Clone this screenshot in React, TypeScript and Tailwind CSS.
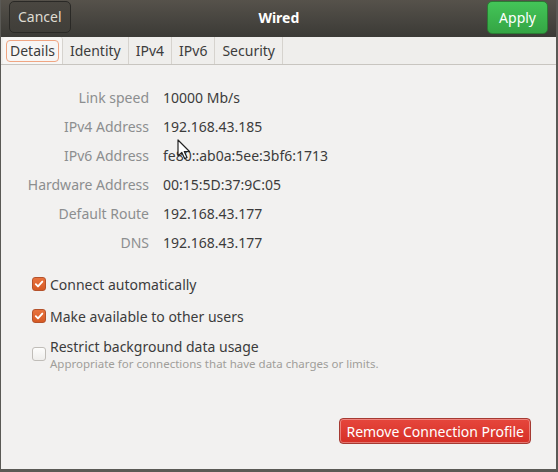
import React from "react";

const rows = [
  { label: "Link speed", value: "10000 Mb/s" },
  { label: "IPv4 Address", value: "192.168.43.185" },
  { label: "IPv6 Address", value: "fe80::ab0a:5ee:3bf6:1713" },
  { label: "Hardware Address", value: "00:15:5D:37:9C:05" },
  { label: "Default Route", value: "192.168.43.177" },
  { label: "DNS", value: "192.168.43.177" },
];

const tabs = ["Details", "Identity", "IPv4", "IPv6", "Security"];

function Check({ checked }: { checked: boolean }) {
  if (!checked) {
    return (
      <span className="block w-[14px] h-[14px] rounded-[3px] border border-[#c0bdb8] bg-gradient-to-b from-[#fdfdfc] to-[#efeeec] shrink-0" />
    );
  }
  return (
    <span className="w-[14px] h-[14px] rounded-[3px] border border-[#b5522b] bg-gradient-to-b from-[#e8733e] to-[#d65a24] flex items-center justify-center shrink-0">
      <svg width="10" height="10" viewBox="0 0 10 10">
        <path d="M1.8 5.2 L4 7.4 L8.3 2.6" fill="none" stroke="white" strokeWidth="1.9" strokeLinecap="round" strokeLinejoin="round" />
      </svg>
    </span>
  );
}

export default function App() {
  return (
    <div className="w-[558px] h-[472px] bg-[#f2f1f0] relative flex flex-col border-l border-r-2 border-b-[3px] border-[#5a5955] font-['Noto_Sans',sans-serif] overflow-hidden">
      {/* Header bar */}
      <div className="h-[37px] shrink-0 bg-gradient-to-b from-[#56524b] to-[#3b3a36] flex items-center justify-between pl-2 pr-2">
        <button className="h-[32px] -mt-[4px] px-[8px] rounded-[5px] border border-[#2a2926] bg-gradient-to-b from-[#4a4741] to-[#403e39] text-[#dfdbd2] text-[14px]">
          Cancel
        </button>
        <span className="text-white text-[14px] font-bold -mt-[2px]">Wired</span>
        <button className="h-[33px] -mt-[3px] px-[11px] rounded-[5px] border border-[#2a7d33] bg-gradient-to-b from-[#44c558] to-[#34a544] text-white text-[14px]">
          Apply
        </button>
      </div>

      {/* Tabs */}
      <div className="h-[28px] shrink-0 flex items-stretch border-b border-[#c8c5c0] bg-[#efeeec] pl-[2px]">
        {tabs.map((t, i) => (
          <div
            key={t}
            className={
              i === 0
                ? "flex items-center px-[3px] bg-[#f7f6f5] border-r border-[#d6d3ce] rounded-t-[3px]"
                : "flex items-center px-[7px] border-r border-[#d6d3ce] text-[#3c3c3c]"
            }
          >
            {i === 0 ? (
              <span className="px-[3px] leading-[20px] rounded-[4px] border border-[#f0a582] text-[#3c3c3c] text-[14px]">
                {t}
              </span>
            ) : (
              <span className="text-[14px]">{t}</span>
            )}
          </div>
        ))}
      </div>

      {/* Details */}
      <div className="flex flex-col pt-[18px]">
        {rows.map((r) => (
          <div key={r.label} className="flex items-center h-[29px] text-[14px]">
            <span className="w-[148px] text-right text-[#8c8e8f]">{r.label}</span>
            <span className="ml-[14px] text-[#3c3c3c]">{r.value}</span>
          </div>
        ))}
      </div>

      {/* Options */}
      <div className="flex flex-col pl-[31px] mt-[18px] gap-[14px]">
        <label className="flex items-center gap-[4px] h-[18px] text-[14px] text-[#3c3c3c]">
          <Check checked />
          Connect automatically
        </label>
        <label className="flex items-center gap-[4px] h-[18px] text-[14px] text-[#3c3c3c]">
          <Check checked />
          Make available to other users
        </label>
        <div className="flex items-start gap-[4px] -mt-[2px]">
          <span className="block mt-[10px]">
            <Check checked={false} />
          </span>
          <div className="flex flex-col">
            <span className="text-[14px] text-[#3c3c3c] leading-[20px]">Restrict background data usage</span>
            <span className="text-[11.5px] text-[#a09e9a] leading-[13px]">
              Appropriate for connections that have data charges or limits.
            </span>
          </div>
        </div>
      </div>

      <div className="flex-1" />

      {/* Footer */}
      <div className="flex justify-end pr-[25px] pb-[25px]">
        <button className="h-[26px] px-[6px] rounded-[4px] border border-[#a53a32] bg-gradient-to-b from-[#e6463c] to-[#d62f26] text-white text-[14px] shadow-[0_0_0_1px_rgba(255,255,255,0.35)_inset]">
          Remove Connection Profile
        </button>
      </div>

      {/* Mouse pointer */}
      <svg className="absolute left-[176px] top-[139px]" width="14" height="22" viewBox="0 0 14 22">
        <path d="M1 1 L1 17 L4.8 13.4 L7.6 19.6 L10 18.5 L7.3 12.5 L12.5 12.5 Z" fill="white" stroke="#222" strokeWidth="1.2" strokeLinejoin="round" />
      </svg>
    </div>
  );
}
